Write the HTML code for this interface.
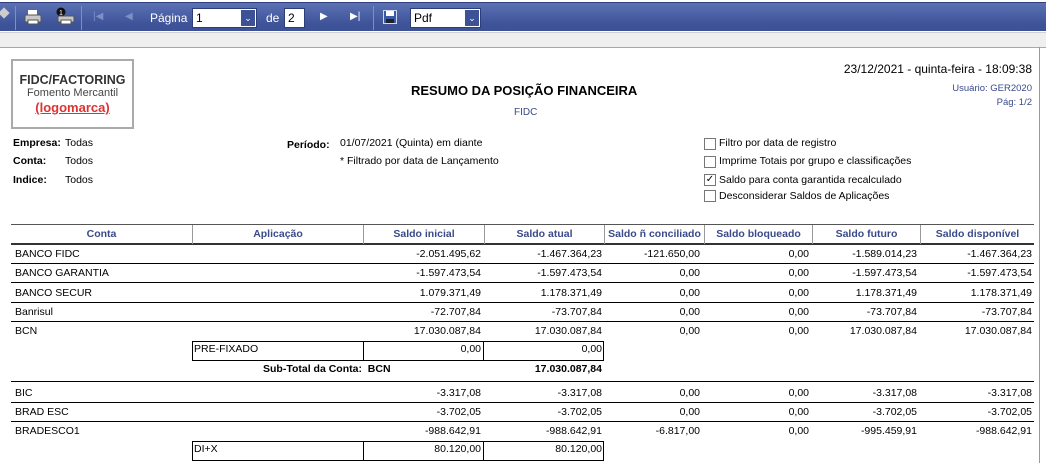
<!DOCTYPE html>
<html><head><meta charset="utf-8"><style>
*{margin:0;padding:0;box-sizing:border-box}
body{width:1046px;height:463px;overflow:hidden;background:#fff;font-family:"Liberation Sans",sans-serif;font-size:10.5px;color:#000;position:relative}
.a{position:absolute;white-space:nowrap}
.tb{position:absolute;left:0;top:2px;width:1046px;height:29px;background:linear-gradient(#5c72b5,#3e5398 75%,#3c5196);border-top:1px solid #2e3f80}
.gb{position:absolute;left:0;top:32px;width:1046px;height:16px;background:#efefef;border-top:1px solid #d0d0d0;border-bottom:1px solid #a8a8a8}
.sep{position:absolute;top:3px;width:1px;height:24px;background:#2d3d78;border-right:1px solid #7e8fc6}
.sel{position:absolute;top:5px;height:20px;background:#fff;border:1px solid #2d3d78;font-size:12px;padding:2px 3px}
.dd{position:absolute;top:0;right:0;width:16px;height:18px;background:#3c5196;border:1px solid #fff;color:#fff;font-size:9px;text-align:center;line-height:16px}
.w{color:#fff;font-size:12px;top:9px}
.hd{position:absolute;top:224px;height:21px;border-top:1px solid #555;border-bottom:2px solid #333;color:#3a4a8a;font-weight:bold;font-size:10.5px;text-align:center;line-height:19px}
.hc{position:absolute;top:0;height:19px;border-left:1px solid #999;text-align:center}
.hl{position:absolute;left:11px;width:1023px;height:1px;background:#000}
.r{position:absolute;text-align:right;white-space:nowrap}
.cb{position:absolute;left:704px;width:12px;height:12px;border:1px solid #777;background:#fff}
.bx{position:absolute;height:20px;border:1px solid #000}
</style></head><body>
<div class="tb">
 <div class="a" style="left:0;top:6px;width:8px;height:8px;background:#ccc;transform:rotate(45deg)"></div>
 <div class="sep" style="left:15px"></div>
 <svg class="a" style="left:24px;top:6px" width="18" height="16"><rect x="4" y="1" width="9" height="5" fill="#fff"/><rect x="1" y="6" width="16" height="7" rx="1" fill="#c8c8c8" stroke="#555"/><rect x="4" y="11" width="10" height="4" fill="#fff" stroke="#555"/></svg>
 <svg class="a" style="left:55px;top:4px" width="20" height="18"><circle cx="6" cy="5" r="4.5" fill="#111"/><text x="4" y="8" fill="#fff" font-size="7" font-family="Liberation Sans">1</text><rect x="3" y="9" width="16" height="6" rx="1" fill="#c8c8c8" stroke="#555"/><rect x="6" y="13" width="10" height="4" fill="#fff" stroke="#555"/></svg>
 <div class="sep" style="left:81px"></div>
 <div class="a" style="left:93px;top:8px;color:#7e8fc6;font-size:10px">|◀</div>
 <div class="a" style="left:125px;top:8px;color:#7e8fc6;font-size:10px">◀</div>
 <div class="a w" style="left:150px;top:8px">Página</div>
 <div class="sel" style="left:192px;width:65px">1<div class="dd">&#8964;</div></div>
 <div class="a w" style="left:266px;top:8px">de</div>
 <div class="sel" style="left:284px;width:21px">2</div>
 <div class="a" style="left:320px;top:8px;color:#fff;font-size:10px">▶</div>
 <div class="a" style="left:350px;top:8px;color:#fff;font-size:10px">▶|</div>
 <div class="sep" style="left:373px"></div>
 <svg class="a" style="left:383px;top:7px" width="14" height="14"><rect x="0.5" y="0.5" width="13" height="13" fill="#3a5aa8" stroke="#cfd8ee"/><rect x="3" y="1" width="8" height="5" fill="#fff"/><rect x="3" y="9" width="8" height="4" fill="#222"/></svg>
 <div class="sel" style="left:410px;width:71px">Pdf<div class="dd">&#8964;</div></div>
</div>
<div class="gb"></div>
<div class="a" style="left:1039px;top:47px;width:1px;height:416px;background:#999"></div>

<div class="a" style="left:11px;top:59px;width:123px;height:70px;border:2px solid #aaa;text-align:center">
 <div style="font-weight:bold;font-size:12.5px;color:#333;margin-top:12px;line-height:14px">FIDC/FACTORING</div>
 <div style="font-size:11px;color:#444;line-height:12px">Fomento Mercantil</div>
 <div style="font-weight:bold;font-size:13px;color:#d33;text-decoration:underline;line-height:17px">(logomarca)</div>
</div>
<div class="a" style="left:411px;top:83px;font-weight:bold;font-size:13px">RESUMO DA POSIÇÃO FINANCEIRA</div>
<div class="a" style="left:514px;top:107px;color:#3a4a8a;font-size:10px">FIDC</div>
<div class="r" style="right:14px;top:62px;font-size:12px">23/12/2021 - quinta-feira - 18:09:38</div>
<div class="r" style="right:14px;top:83px;font-size:9.5px;color:#3a4a8a">Usuário: GER2020</div>
<div class="r" style="right:14px;top:97px;font-size:9.5px;color:#3a4a8a">Pág: 1/2</div>

<div class="a" style="left:13px;top:137px;font-weight:bold">Empresa:</div><div class="a" style="left:65px;top:137px">Todas</div>
<div class="a" style="left:13px;top:155px;font-weight:bold">Conta:</div><div class="a" style="left:65px;top:155px">Todos</div>
<div class="a" style="left:13px;top:174px;font-weight:bold">Indice:</div><div class="a" style="left:65px;top:174px">Todos</div>
<div class="a" style="left:287px;top:139px;font-weight:bold">Período:</div>
<div class="a" style="left:340px;top:137px">01/07/2021 (Quinta) em diante</div>
<div class="a" style="left:340px;top:155px">* Filtrado por data de Lançamento</div>

<div class="cb" style="top:138px"></div><div class="a" style="left:719px;top:137px">Filtro por data de registro</div>
<div class="cb" style="top:156px"></div><div class="a" style="left:719px;top:155px">Imprime Totais por grupo e classificações</div>
<div class="cb" style="top:174px;font-size:10px;line-height:10px;text-align:center">✓</div><div class="a" style="left:719px;top:174px">Saldo para conta garantida recalculado</div>
<div class="cb" style="top:190px"></div><div class="a" style="left:719px;top:190px">Desconsiderar Saldos de Aplicações</div>

<div class="hd" style="left:11px;width:1023px">
 <div class="hc" style="left:0;width:181px;border-left:none">Conta</div>
 <div class="hc" style="left:181px;width:171px">Aplicação</div>
 <div class="hc" style="left:352px;width:121px">Saldo inicial</div>
 <div class="hc" style="left:473px;width:120px">Saldo atual</div>
 <div class="hc" style="left:593px;width:100px">Saldo ñ conciliado</div>
 <div class="hc" style="left:693px;width:108px">Saldo bloqueado</div>
 <div class="hc" style="left:801px;width:108px">Saldo futuro</div>
 <div class="hc" style="left:909px;width:114px">Saldo disponível</div>
</div>

<!-- rows -->
<div class="a" style="left:15px;top:248px">BANCO FIDC</div>
<div class="r" style="right:565px;top:248px">-2.051.495,62</div><div class="r" style="right:444px;top:248px">-1.467.364,23</div><div class="r" style="right:346px;top:248px">-121.650,00</div><div class="r" style="right:237px;top:248px">0,00</div><div class="r" style="right:129px;top:248px">-1.589.014,23</div><div class="r" style="right:14px;top:248px">-1.467.364,23</div>
<div class="hl" style="top:263px"></div>
<div class="a" style="left:15px;top:267px">BANCO GARANTIA</div>
<div class="r" style="right:565px;top:267px">-1.597.473,54</div><div class="r" style="right:444px;top:267px">-1.597.473,54</div><div class="r" style="right:346px;top:267px">0,00</div><div class="r" style="right:237px;top:267px">0,00</div><div class="r" style="right:129px;top:267px">-1.597.473,54</div><div class="r" style="right:14px;top:267px">-1.597.473,54</div>
<div class="hl" style="top:282px"></div>
<div class="a" style="left:15px;top:287px">BANCO SECUR</div>
<div class="r" style="right:565px;top:287px">1.079.371,49</div><div class="r" style="right:444px;top:287px">1.178.371,49</div><div class="r" style="right:346px;top:287px">0,00</div><div class="r" style="right:237px;top:287px">0,00</div><div class="r" style="right:129px;top:287px">1.178.371,49</div><div class="r" style="right:14px;top:287px">1.178.371,49</div>
<div class="hl" style="top:302px"></div>
<div class="a" style="left:15px;top:306px">Banrisul</div>
<div class="r" style="right:565px;top:306px">-72.707,84</div><div class="r" style="right:444px;top:306px">-73.707,84</div><div class="r" style="right:346px;top:306px">0,00</div><div class="r" style="right:237px;top:306px">0,00</div><div class="r" style="right:129px;top:306px">-73.707,84</div><div class="r" style="right:14px;top:306px">-73.707,84</div>
<div class="hl" style="top:321px"></div>
<div class="a" style="left:15px;top:325px">BCN</div>
<div class="r" style="right:565px;top:325px">17.030.087,84</div><div class="r" style="right:444px;top:325px">17.030.087,84</div><div class="r" style="right:346px;top:325px">0,00</div><div class="r" style="right:237px;top:325px">0,00</div><div class="r" style="right:129px;top:325px">17.030.087,84</div><div class="r" style="right:14px;top:325px">17.030.087,84</div>
<div class="bx" style="left:192px;top:341px;width:172px"></div><div class="bx" style="left:363px;top:341px;width:121px"></div><div class="bx" style="left:483px;top:341px;width:121px"></div>
<div class="a" style="left:194px;top:343px">PRE-FIXADO</div><div class="r" style="right:565px;top:343px">0,00</div><div class="r" style="right:444px;top:343px">0,00</div>
<div class="a" style="left:263px;top:363px;font-weight:bold">Sub-Total da Conta:&nbsp; BCN</div>
<div class="r" style="right:444px;top:363px;font-weight:bold">17.030.087,84</div>
<div class="hl" style="top:381px"></div>
<div class="a" style="left:15px;top:387px">BIC</div>
<div class="r" style="right:565px;top:387px">-3.317,08</div><div class="r" style="right:444px;top:387px">-3.317,08</div><div class="r" style="right:346px;top:387px">0,00</div><div class="r" style="right:237px;top:387px">0,00</div><div class="r" style="right:129px;top:387px">-3.317,08</div><div class="r" style="right:14px;top:387px">-3.317,08</div>
<div class="hl" style="top:402px"></div>
<div class="a" style="left:15px;top:406px">BRAD ESC</div>
<div class="r" style="right:565px;top:406px">-3.702,05</div><div class="r" style="right:444px;top:406px">-3.702,05</div><div class="r" style="right:346px;top:406px">0,00</div><div class="r" style="right:237px;top:406px">0,00</div><div class="r" style="right:129px;top:406px">-3.702,05</div><div class="r" style="right:14px;top:406px">-3.702,05</div>
<div class="hl" style="top:421px"></div>
<div class="a" style="left:15px;top:425px">BRADESCO1</div>
<div class="r" style="right:565px;top:425px">-988.642,91</div><div class="r" style="right:444px;top:425px">-988.642,91</div><div class="r" style="right:346px;top:425px">-6.817,00</div><div class="r" style="right:237px;top:425px">0,00</div><div class="r" style="right:129px;top:425px">-995.459,91</div><div class="r" style="right:14px;top:425px">-988.642,91</div>
<div class="bx" style="left:192px;top:441px;width:172px"></div><div class="bx" style="left:363px;top:441px;width:121px"></div><div class="bx" style="left:483px;top:441px;width:121px"></div>
<div class="a" style="left:194px;top:443px">DI+X</div><div class="r" style="right:565px;top:443px">80.120,00</div><div class="r" style="right:444px;top:443px">80.120,00</div>
</body></html>
